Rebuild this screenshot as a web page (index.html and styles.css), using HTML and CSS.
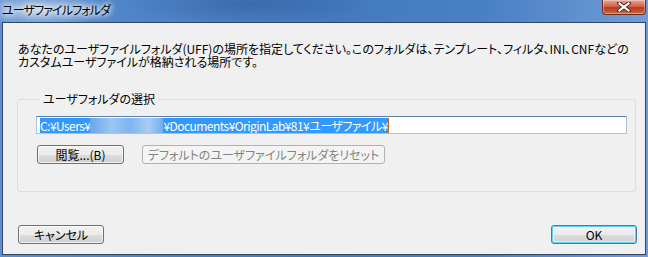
FILE: index.html
```html
<!DOCTYPE html>
<html>

<head>
  <meta charset="utf-8">
  <link rel="stylesheet" href="styles.css">
</head>

<body>

  <div class="window">
    <div class="titlebar">
      <span class="title">ユーザファイルフォルダ</span>
      <span class="close-button">
        <svg width="14" height="10" viewBox="0 0 14 10">
          <path d="M2 1 L12 9 M12 1 L2 9" stroke="#5a2a22" stroke-width="4" stroke-linecap="square" />
          <path d="M2.5 1.5 L11.5 8.5 M11.5 1.5 L2.5 8.5" stroke="#ffffff" stroke-width="2.2" stroke-linecap="square" />
        </svg>
      </span>
    </div>

    <div class="client">
      <p class="intro">あなたのユーザファイルフォルダ(UFF)の場所を指定してください。このフォルダは、テンプレート、フィルタ、INI、CNFなどのカスタムユーザファイルが格納される場所です。</p>

      <fieldset class="group">
        <legend>ユーザフォルダの選択</legend>
        <div class="path-input">
          <span class="selected">C:¥Users¥<span class="masked"></span>¥Documents¥OriginLab¥81¥ユーザファイル¥</span><span class="caret"></span>
        </div>
        <div class="button-row">
          <button class="btn btn-browse">閲覧...(B)</button>
          <button class="btn btn-reset" disabled>デフォルトのユーザファイルフォルダをリセット</button>
        </div>
      </fieldset>

      <div class="footer">
        <button class="btn btn-dialog">キャンセル</button>
        <button class="btn btn-dialog btn-default">OK</button>
      </div>
    </div>
  </div>

</body>

</html>
```

FILE: styles.css
```css
html,
body {
  margin: 0;
  padding: 0;
}

body {
  width: 648px;
  height: 257px;
  overflow: hidden;
  font-family: "Noto Sans CJK JP", "DejaVu Sans", sans-serif;
  font-size: 12px;
  color: #000;
}

.window {
  display: flex;
  flex-direction: column;
  width: 648px;
  height: 257px;
  background:
    radial-gradient(ellipse 70px 18px at 40px 10px, rgba(255, 255, 255, 0.55), rgba(255, 255, 255, 0) 100%),
    radial-gradient(ellipse 120px 20px at 250px 4px, rgba(40, 70, 130, 0.35), rgba(40, 70, 130, 0) 100%),
    linear-gradient(90deg, #5e8fcf 0%, #4e84c8 20%, #4379bf 50%, #4a80c6 75%, #6f9cd6 100%);
}

.titlebar {
  display: flex;
  justify-content: space-between;
  align-items: flex-start;
  height: 22px;
}

.title {
  margin: 3px 0 0 2px;
  font-size: 12px;
  line-height: 14px;
  letter-spacing: -0.9px;
  color: #000;
  font-feature-settings: "palt";
  text-shadow: 0 0 6px #fff, 0 0 10px #fff, 0 0 4px rgba(255, 255, 255, 0.8);
}

.close-button {
  display: flex;
  justify-content: center;
  align-items: center;
  width: 42px;
  height: 14px;
  margin-right: 2px;
  border: 1px solid #6b2f28;
  border-top: none;
  border-radius: 0 0 4px 4px;
  background: linear-gradient(#e8a493 0%, #d2654c 45%, #b33a1f 55%, #cf6a3d 100%);
  box-shadow: inset 0 0 0 1px rgba(255, 255, 255, 0.35);
}

.client {
  display: flex;
  flex-direction: column;
  flex: 1;
  margin: 0 2px 2px 2px;
  border: 1px solid #33465f;
  background-color: #f0f0f0;
}

.intro {
  margin: 19px 14px 0 15px;
  line-height: 13px;
  font-feature-settings: "palt";
}

.group {
  margin: 25px 9px 0 14px;
  padding: 11px 8px 27px 18px;
  border: 1px solid #d5dfe5;
  border-radius: 3px;
}

.group legend {
  margin-left: 4px;
  padding: 0 3px 0 3px;
  line-height: 12px;
  font-feature-settings: "palt";
}

.path-input {
  display: flex;
  align-items: center;
  height: 16px;
  padding: 0 3px;
  border: 1px solid #abc4de;
  border-top-color: #5b7ea3;
  background-color: #fff;
  white-space: nowrap;
  overflow: hidden;
}

.selected {
  display: inline-flex;
  align-items: center;
  height: 15px;
  line-height: 15px;
  letter-spacing: -0.55px;
  background-color: #3399ff;
  color: #fff;
  font-feature-settings: "palt";
}

.masked {
  display: inline-block;
  width: 73px;
  height: 15px;
  background: linear-gradient(90deg, #6aa8ec, #9cc6f2 30%, #7fb4ee 55%, #a8cdf3 80%, #72adee);
}

.caret {
  display: inline-block;
  width: 1px;
  height: 15px;
  background-color: #b8691e;
}

.button-row {
  display: flex;
  gap: 18px;
  margin-top: 11px;
  padding-left: 1px;
}

.btn {
  height: 19px;
  padding: 0;
  border: 1px solid #707070;
  border-radius: 3px;
  background: linear-gradient(#f2f2f2 0%, #ebebeb 50%, #dddddd 51%, #cfcfcf 100%);
  box-shadow: inset 0 0 0 1px rgba(255, 255, 255, 0.7);
  font-family: "Noto Sans CJK JP", "DejaVu Sans", sans-serif;
  font-size: 12px;
  line-height: 15px;
  color: #000;
  font-feature-settings: "palt";
}

.btn-browse {
  width: 87px;
}

.btn-reset {
  width: 243px;
  border-color: #adb2b5;
  background: #f4f4f4;
  box-shadow: none;
  color: #838383;
}

.footer {
  display: flex;
  justify-content: space-between;
  margin: auto 8px 10px 15px;
}

.btn-dialog {
  width: 86px;
}

.btn-default {
  border-color: #3c7fb1;
  box-shadow: inset 0 0 0 1px #5fd0f6, inset 0 0 0 2px rgba(255, 255, 255, 0.5);
}
```
